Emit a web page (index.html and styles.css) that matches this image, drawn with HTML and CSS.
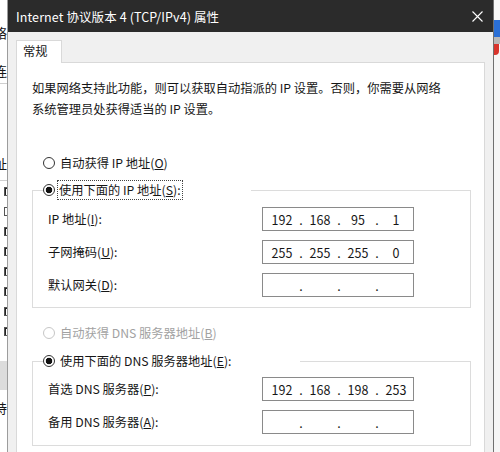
FILE: index.html
```html
<!DOCTYPE html>
<html lang="zh-CN">
<head>
    <meta charset="UTF-8">
    <title>Internet 协议版本 4 (TCP/IPv4) 属性</title>
    <link rel="stylesheet" href="styles.css">
</head>
<body>
    <div class="desk">
        <!-- window behind, left edge -->
        <div class="behind-left">
            <div class="bl-char bl-top">络</div>
            <div class="bl-char bl-second">连</div>
            <div class="bl-rule bl-rule-1"></div>
            <div class="bl-char bl-third">址</div>
            <div class="bl-rule bl-rule-2"></div>
            <div class="bl-checks">
                <span class="bl-box"></span>
                <span class="bl-box empty"></span>
                <span class="bl-box"></span>
                <span class="bl-box"></span>
                <span class="bl-box"></span>
                <span class="bl-box"></span>
                <span class="bl-box"></span>
                <span class="bl-box"></span>
            </div>
            <div class="bl-sel"></div>
            <div class="bl-char bl-last">持</div>
        </div>

        <div class="dialog">
            <div class="titlebar">
                <span class="title">Internet 协议版本 4 (TCP/IPv4) 属性</span>
                <svg class="close" width="11" height="11" viewBox="0 0 11 11">
                    <path d="M0.5 0.5 L10.5 10.5 M10.5 0.5 L0.5 10.5" stroke="#fff" stroke-width="1.1" fill="none"/>
                </svg>
            </div>

            <div class="tabs">
                <div class="tab">常规</div>
            </div>

            <div class="panel">
                <p class="desc">如果网络支持此功能，则可以获取自动指派的 IP 设置。否则，你需要从网络<br>系统管理员处获得适当的 IP 设置。</p>

                <div class="opt first-opt">
                    <span class="radio"></span>
                    <span>自动获得 IP 地址(<u>O</u>)</span>
                </div>

                <fieldset class="group">
                    <legend>
                        <span class="opt">
                            <span class="radio on"></span>
                            <span class="focus">使用下面的 IP 地址(<u>S</u>):</span>
                        </span>
                    </legend>
                    <div class="row">
                        <span class="label">IP 地址(<u>I</u>):</span>
                        <div class="ip">
                            <span class="seg">192</span><span class="dot">.</span><span class="seg">168</span><span class="dot">.</span><span class="seg">95</span><span class="dot">.</span><span class="seg">1</span>
                        </div>
                    </div>
                    <div class="row">
                        <span class="label">子网掩码(<u>U</u>):</span>
                        <div class="ip">
                            <span class="seg">255</span><span class="dot">.</span><span class="seg">255</span><span class="dot">.</span><span class="seg">255</span><span class="dot">.</span><span class="seg">0</span>
                        </div>
                    </div>
                    <div class="row">
                        <span class="label">默认网关(<u>D</u>):</span>
                        <div class="ip">
                            <span class="seg"></span><span class="dot">.</span><span class="seg"></span><span class="dot">.</span><span class="seg"></span><span class="dot">.</span><span class="seg"></span>
                        </div>
                    </div>
                </fieldset>

                <div class="opt disabled dns-auto">
                    <span class="radio"></span>
                    <span>自动获得 DNS 服务器地址(<u>B</u>)</span>
                </div>

                <fieldset class="group dns">
                    <legend>
                        <span class="opt">
                            <span class="radio on"></span>
                            <span>使用下面的 DNS 服务器地址(<u>E</u>):</span>
                        </span>
                    </legend>
                    <div class="row">
                        <span class="label">首选 DNS 服务器(<u>P</u>):</span>
                        <div class="ip">
                            <span class="seg">192</span><span class="dot">.</span><span class="seg">168</span><span class="dot">.</span><span class="seg">198</span><span class="dot">.</span><span class="seg">253</span>
                        </div>
                    </div>
                    <div class="row">
                        <span class="label">备用 DNS 服务器(<u>A</u>):</span>
                        <div class="ip">
                            <span class="seg"></span><span class="dot">.</span><span class="seg"></span><span class="dot">.</span><span class="seg"></span><span class="dot">.</span><span class="seg"></span>
                        </div>
                    </div>
                </fieldset>
            </div>
        </div>

        <!-- desktop behind, right edge -->
        <div class="behind-right">
            <div class="br-blue"></div>
            <div class="br-grey"></div>
            <div class="br-red"></div>
        </div>
    </div>
</body>
</html>
```

FILE: styles.css
```css
* {
    box-sizing: border-box;
}

body {
    margin: 0;
    width: 500px;
    height: 452px;
    overflow: hidden;
    font-family: "Noto Sans CJK SC", "Noto Sans", sans-serif;
    font-size: 12.25px;
    color: #161616;
    background: #fff;
}

.desk {
    display: flex;
    height: 452px;
}

/* window behind the dialog */
.behind-left {
    width: 7px;
    overflow: hidden;
    background: #fff;
    display: flex;
    flex-direction: column;
}

.bl-char {
    font-size: 13px;
    line-height: 16px;
    margin-left: -6px;
    white-space: nowrap;
}

.bl-top { margin-top: 25px; }
.bl-second { margin-top: 22px; }
.bl-third { margin-top: 72px; }
.bl-last { margin-top: 10px; }

.bl-rule {
    border-top: 1px solid #cfcfcf;
    width: 7px;
}

.bl-rule-1 { margin-top: 4px; }
.bl-rule-2 { margin-top: 8px; }

.bl-checks {
    display: flex;
    flex-direction: column;
    gap: 11px;
    margin-top: 6px;
}

.bl-box {
    display: block;
    width: 10px;
    height: 9px;
    margin-left: 4px;
    border: 1px solid #555;
    background: #fff;
    box-shadow: inset 2px 2px 0 -1px #222;
}

.bl-box.empty {
    box-shadow: none;
}

.bl-sel {
    height: 29px;
    margin-top: 25px;
    background: #dcdcdc;
}

/* the dialog */
.dialog {
    width: 487px;
    display: flex;
    flex-direction: column;
    background: #f0f0f0;
    border-left: 1px solid #9c9c9c;
    border-right: 1px solid #707070;
}

.titlebar {
    height: 32px;
    flex: none;
    background: #2b2b2b;
    color: #fff;
    display: flex;
    align-items: center;
    justify-content: space-between;
    padding: 0 10px 0 8px;
}

.title {
    font-size: 12.5px;
    letter-spacing: 0.1px;
}

.close {
    display: block;
}

.tabs {
    display: flex;
    padding: 8px 0 0 8px;
    flex: none;
}

.tab {
    position: relative;
    width: 46px;
    height: 23px;
    margin-bottom: -1px;
    padding-left: 6px;
    line-height: 21px;
    background: #fff;
    border: 1px solid #d9d9d9;
    border-bottom: none;
}

.panel {
    flex: 1;
    margin: 0 8px;
    padding: 15px 13px 0 15px;
    background: #fff;
    border: 1px solid #d9d9d9;
    border-bottom: none;
}

.desc {
    margin: 0;
    line-height: 21px;
    white-space: nowrap;
}

.opt {
    display: flex;
    align-items: center;
    gap: 5px;
    height: 20px;
    white-space: nowrap;
}

.first-opt {
    margin: 33px 0 0 11px;
}

.dns-auto {
    margin: 15px 0 0 11px;
}

.radio {
    width: 12px;
    height: 12px;
    flex: none;
    border: 1px solid #333;
    border-radius: 50%;
    background: #fff;
}

.radio.on {
    background: radial-gradient(circle, #111 0 3px, #fff 3.6px);
}

.opt.disabled {
    color: #a2a2a2;
}

.opt.disabled .radio {
    border-color: #c6c6c6;
}

.focus {
    outline: 1px dotted #444;
    outline-offset: 0;
    padding: 0 1px;
    line-height: 18px;
    margin-left: -2px;
}

.group {
    margin: 7px 0 0 0;
    padding: 0 0 10px 0;
    min-width: 0;
    border: 1px solid #dcdcdc;
}

.group.dns {
    margin-top: 8px;
    padding-bottom: 11px;
}

.group legend {
    margin-left: 10px;
    padding: 0 69px 0 0;
    height: 20px;
}

.row {
    display: flex;
    align-items: center;
    height: 24px;
    margin-top: 9px;
    padding-left: 15px;
}

.group legend + .row {
    margin-top: 7px;
}

.group.dns legend + .row {
    margin-top: 6px;
}

.label {
    width: 214px;
    flex: none;
    white-space: nowrap;
}

.ip {
    display: flex;
    width: 152px;
    height: 24px;
    padding-left: 2px;
    border: 1px solid #8a8a8a;
    align-items: center;
    font-size: 12.5px;
}

.seg {
    width: 34px;
    text-align: center;
}

.dot {
    width: 4px;
    text-align: center;
}

/* desktop behind, right side */
.behind-right {
    flex: 1;
    background: #f6f6f6;
    display: flex;
    flex-direction: column;
}

.br-blue {
    height: 17px;
    margin-top: 20px;
    background: #2a6fd6;
}

.br-grey {
    height: 7px;
    background: #b8b8b8;
}

.br-red {
    height: 11px;
    width: 5px;
    background: #d8342c;
    border-radius: 0 0 4px 0;
}
```
